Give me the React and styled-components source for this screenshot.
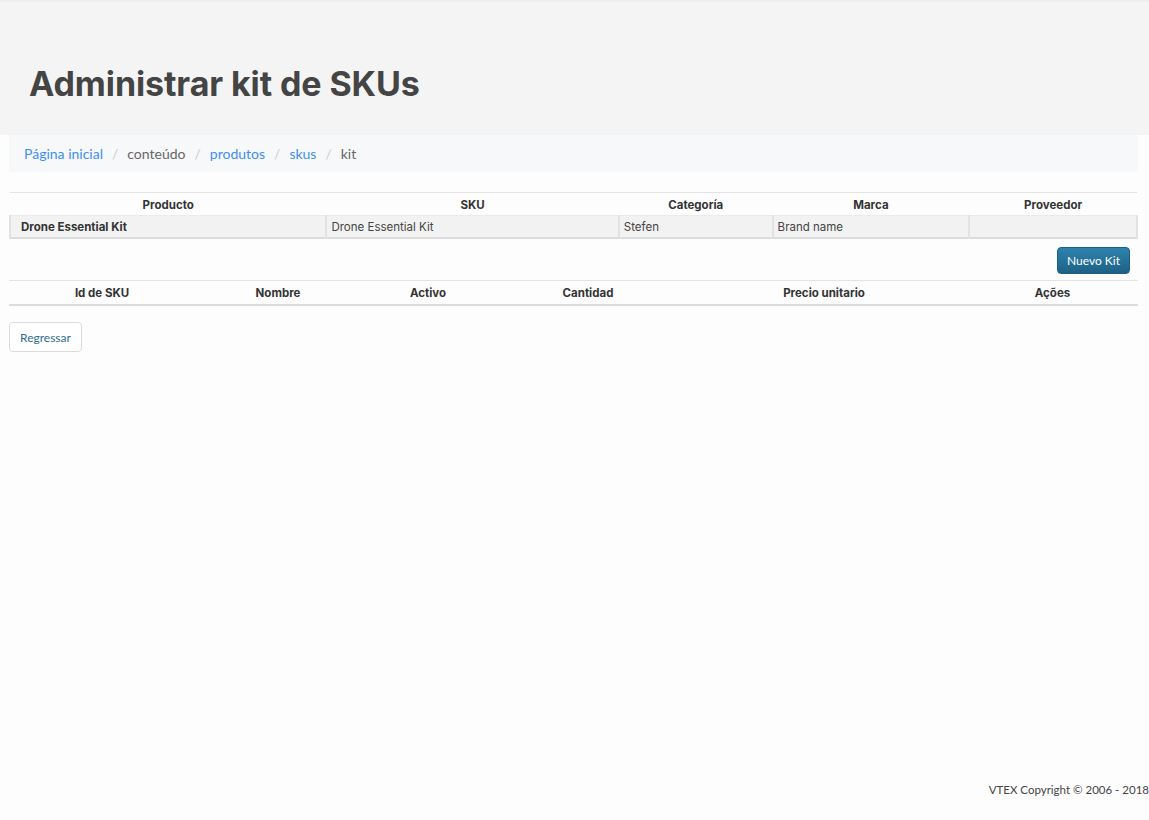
import React from "react";
import styled, { createGlobalStyle } from "styled-components";

const GlobalStyle = createGlobalStyle`
  html, body {
    margin: 0;
    padding: 0;
    background: #fdfdfd;
    font-family: Lato, "Liberation Sans", sans-serif;
  }
  * {
    box-sizing: border-box;
  }
`;

const Page = styled.div`
  min-height: 820px;
  display: flex;
  flex-direction: column;
`;

const Header = styled.header`
  background: #f4f4f4;
  border-top: 2px solid #efefef;
  height: 135px;
  padding: 61px 0 0 29px;
  h1 {
    margin: 0;
    font-family: Inter, "Liberation Sans", sans-serif;
    font-size: 34px;
    font-weight: 700;
    color: #444;
    letter-spacing: -0.1px;
  }
`;

const Content = styled.main`
  padding: 0 11px 0 9px;
  flex: 1;
`;

const Breadcrumb = styled.nav`
  background: #f7f8f9;
  height: 37px;
  display: flex;
  align-items: center;
  padding-left: 15px;
  font-size: 14px;
  color: #666;
  a {
    color: #3f8ff2;
    text-decoration: none;
  }
  span.sep {
    color: #ccc;
    padding: 0 9px;
  }
`;

const Table = styled.table`
  width: 100%;
  border-collapse: collapse;
  margin-top: ${(p) => p.$top || 0}px;
  border-top: 1px solid #e3e3e3;
  border-bottom: 2px solid #dcdcdc;
  font-family: Inter, "Liberation Sans", sans-serif;
  font-size: 11.5px;
  color: #333;
  th {
    height: ${(p) => p.$headHeight || 23}px;
    font-weight: 700;
    text-align: center;
    color: #333;
    padding: 2px 0 0;
  }
`;

const Row = styled.tr`
  background: #f2f2f2;
  td {
    height: 22px;
    padding: 1px 4px 0;
    border-left: 2px solid #e2e2e2;
    border-top: 1px solid #ebebeb;
    color: #444;
  }
  td:last-child {
    border-right: 2px solid #e2e2e2;
  }
  td.name {
    font-weight: 700;
    color: #333;
    padding-left: 10px;
  }
`;

const Actions = styled.div`
  display: flex;
  justify-content: flex-end;
  padding: 8px 8px 6px 0;
`;

const PrimaryButton = styled.button`
  height: 27px;
  padding: 0 9px;
  border: 1px solid #1d5f80;
  border-radius: 4px;
  background: linear-gradient(#2d83ad, #1e6184);
  color: #fff;
  font-family: inherit;
  font-size: 12px;
`;

const SecondaryButton = styled.button`
  margin-top: 16px;
  height: 30px;
  padding: 0 10px;
  border: 1px solid #dcdcdc;
  border-radius: 4px;
  background: #fff;
  color: #2b6d93;
  font-family: inherit;
  font-size: 12px;
`;

const Footer = styled.footer`
  text-align: right;
  font-size: 11.5px;
  color: #444;
  padding: 0 0 24px;
`;

const kitCols = [
  ["Producto", 317],
  ["SKU", 293],
  ["Categoría", 154],
  ["Marca", 197],
  ["Proveedor", 168],
];

const itemCols = [
  ["Id de SKU", 186],
  ["Nombre", 166],
  ["Activo", 134],
  ["Cantidad", 186],
  ["Precio unitario", 286],
  ["Ações", 171],
];

function App() {
  return (
    <Page>
      <GlobalStyle />
      <Header>
        <h1>Administrar kit de SKUs</h1>
      </Header>
      <Content>
        <Breadcrumb>
          <a href="#">Página inicial</a>
          <span className="sep">/</span>
          <span>conteúdo</span>
          <span className="sep">/</span>
          <a href="#">produtos</a>
          <span className="sep">/</span>
          <a href="#">skus</a>
          <span className="sep">/</span>
          <span>kit</span>
        </Breadcrumb>

        <Table $top={20}>
          <colgroup>
            {kitCols.map(([label, w]) => (
              <col key={label} style={{ width: w }} />
            ))}
          </colgroup>
          <thead>
            <tr>
              {kitCols.map(([label]) => (
                <th key={label}>{label}</th>
              ))}
            </tr>
          </thead>
          <tbody>
            <Row>
              <td className="name">Drone Essential Kit</td>
              <td>Drone Essential Kit</td>
              <td>Stefen</td>
              <td>Brand name</td>
              <td></td>
            </Row>
          </tbody>
        </Table>

        <Actions>
          <PrimaryButton>Nuevo Kit</PrimaryButton>
        </Actions>

        <Table $headHeight={25}>
          <colgroup>
            {itemCols.map(([label, w]) => (
              <col key={label} style={{ width: w }} />
            ))}
          </colgroup>
          <thead>
            <tr>
              {itemCols.map(([label]) => (
                <th key={label}>{label}</th>
              ))}
            </tr>
          </thead>
        </Table>

        <SecondaryButton>Regressar</SecondaryButton>
      </Content>
      <Footer>VTEX Copyright © 2006 - 2018</Footer>
    </Page>
  );
}

export default App;
